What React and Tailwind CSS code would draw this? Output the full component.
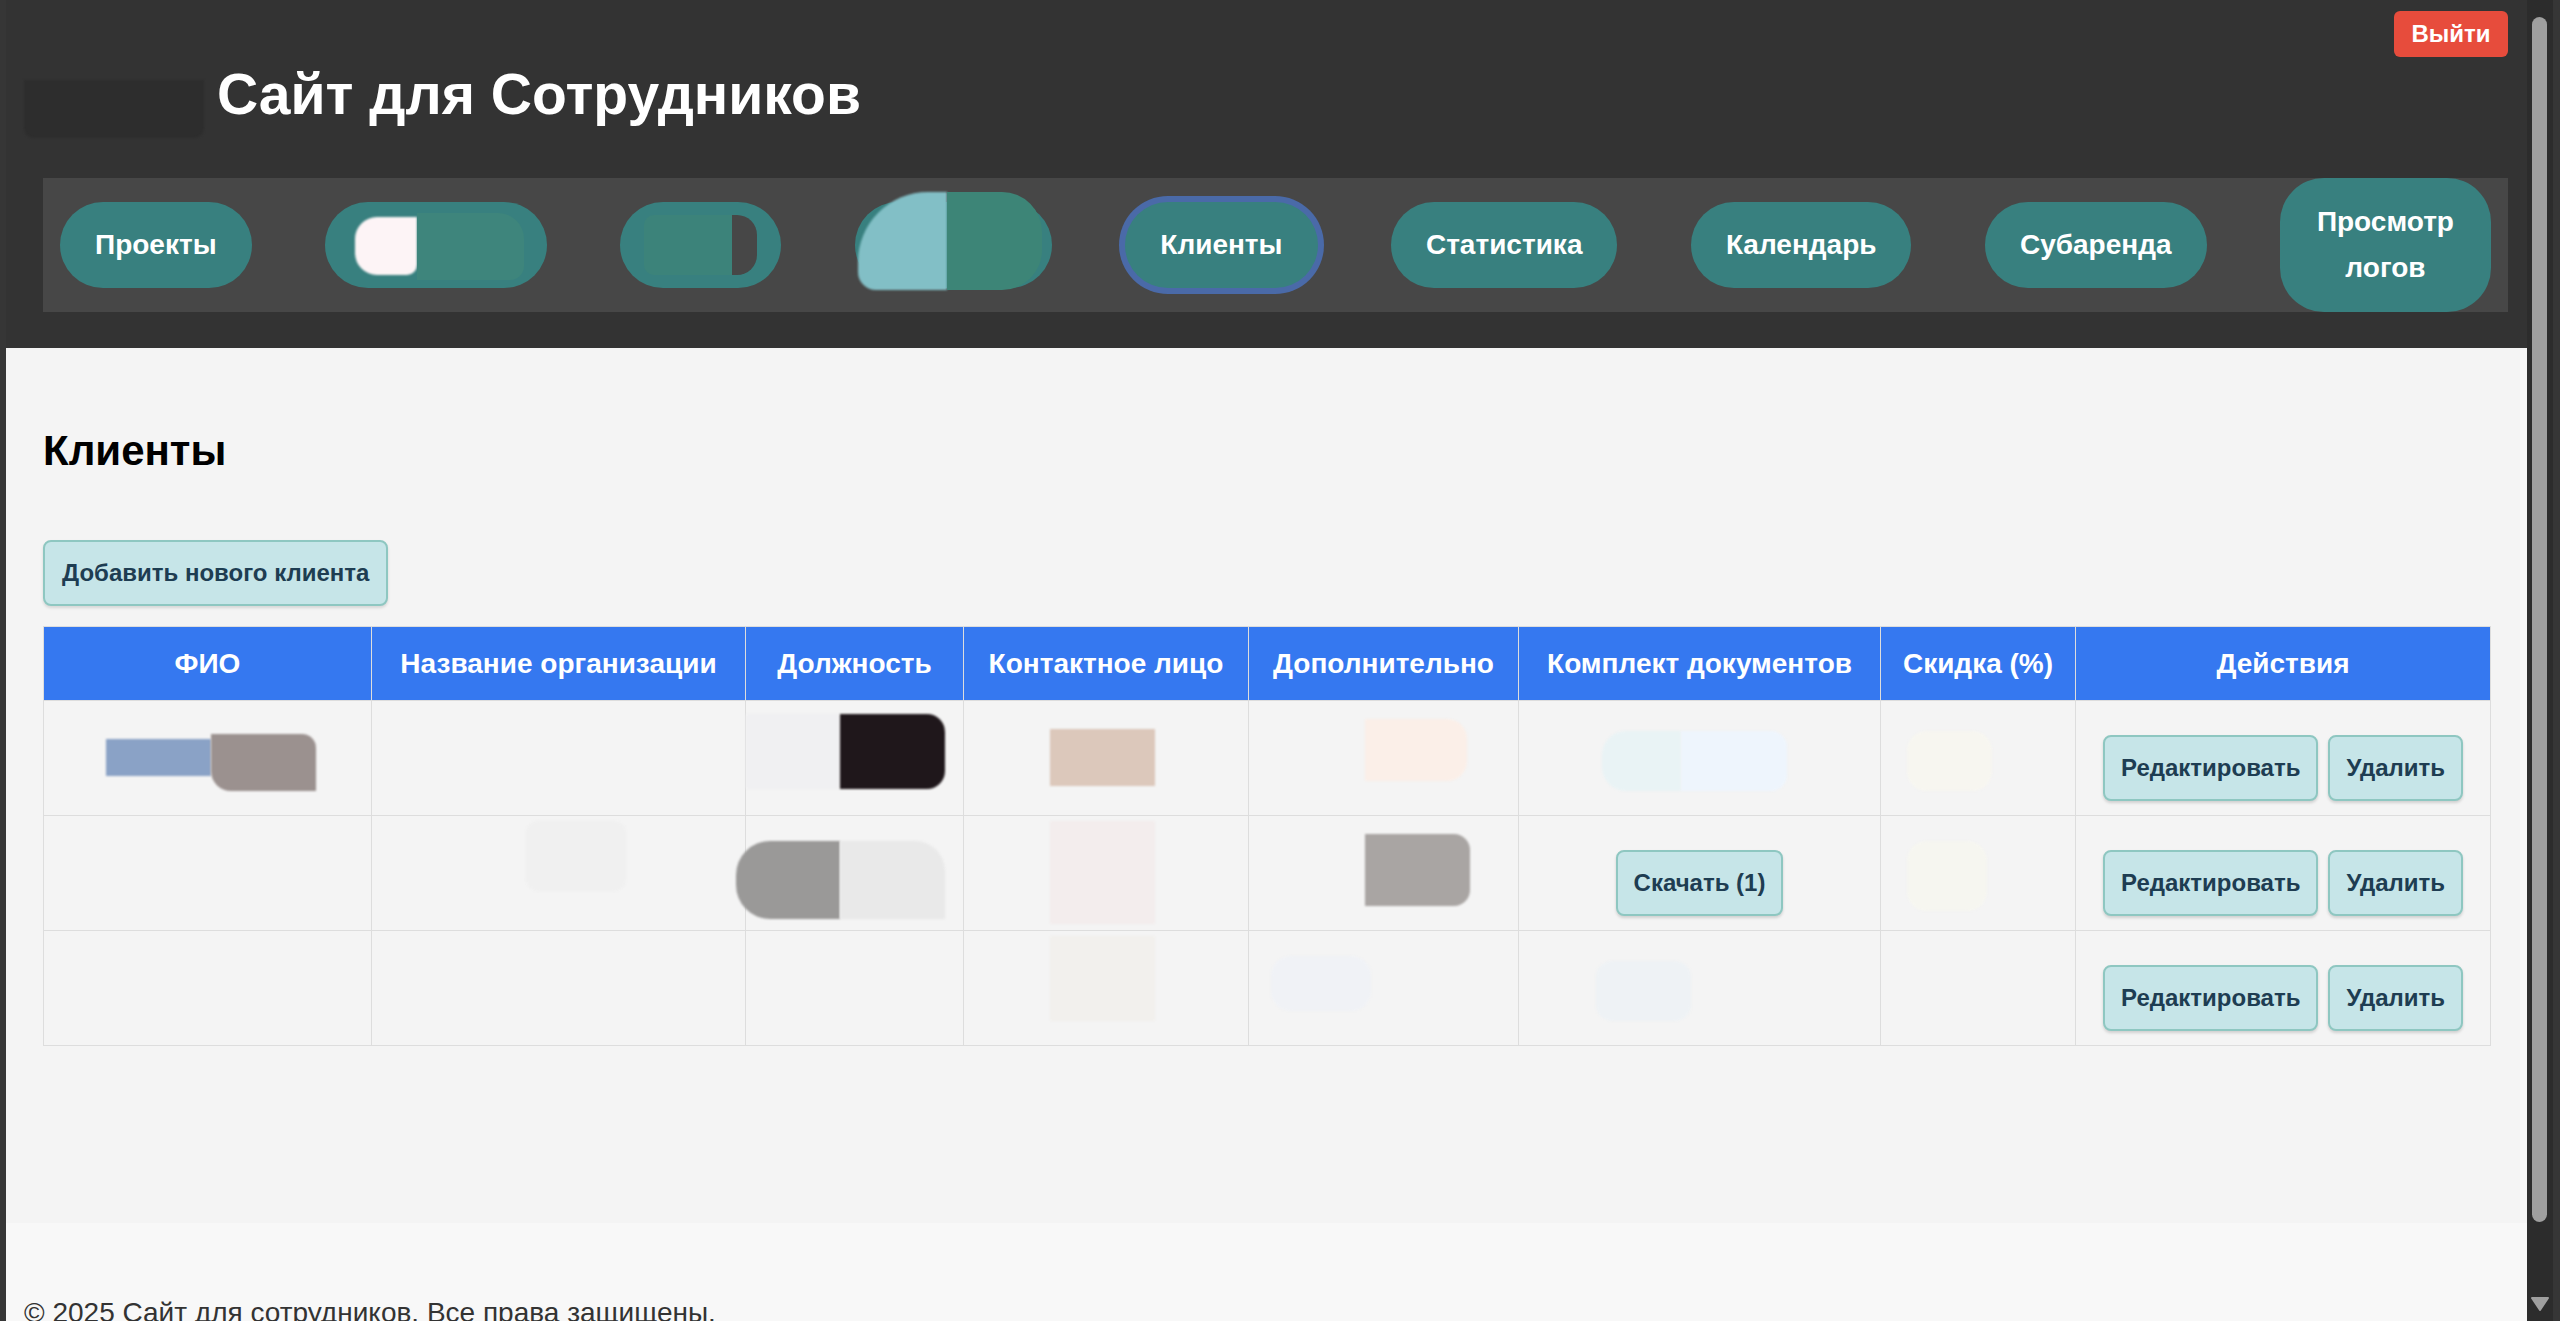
import React from "react";

const navItems = [
  { label: "Проекты" },
  { blur: "a", width: "w-[222px]" },
  { blur: "b", width: "w-[161px]" },
  { blur: "c", width: "w-[197px]" },
  { label: "Клиенты", active: true },
  { label: "Статистика" },
  { label: "Календарь" },
  { label: "Субаренда" },
];

const columns = [
  { title: "ФИО", w: "w-[328px]" },
  { title: "Название организации", w: "w-[374px]" },
  { title: "Должность", w: "w-[218px]" },
  { title: "Контактное лицо", w: "w-[285px]" },
  { title: "Дополнительно", w: "w-[270px]" },
  { title: "Комплект документов", w: "w-[362px]" },
  { title: "Скидка (%)", w: "w-[195px]" },
  { title: "Действия", w: "w-[415px]" },
];

// redacted blobs, one list per cell, positions relative to the cell
const rows = [
  [
    [
      "left-[62px] top-[38px] w-[105px] h-[37px] bg-[#8aa2c6]",
      "left-[167px] top-[33px] w-[105px] h-[57px] bg-[#9b918f] rounded-tr-[14px] rounded-bl-[20px]",
    ],
    [],
    [
      "left-[0px] top-[13px] w-[94px] h-[75px] bg-[#f0f0f2]",
      "left-[94px] top-[13px] w-[105px] h-[75px] bg-[#1f171b] rounded-r-[18px]",
    ],
    ["left-[86px] top-[28px] w-[105px] h-[57px] bg-[#dcc8bb]"],
    ["left-[116px] top-[18px] w-[102px] h-[62px] bg-[#fbefe8] rounded-r-[20px]"],
    [
      "left-[83px] top-[30px] w-[79px] h-[60px] bg-[#e9f3f5] rounded-l-[24px]",
      "left-[162px] top-[30px] w-[106px] h-[60px] bg-[#eef5fd] rounded-r-[16px]",
    ],
    ["left-[26px] top-[30px] w-[85px] h-[60px] bg-[#f7f6f0] rounded-[20px]"],
  ],
  [
    [],
    ["left-[154px] top-[5px] w-[100px] h-[70px] bg-[#f0f0f0] rounded-[12px]"],
    [
      "left-[-10px] top-[25px] w-[104px] h-[78px] bg-[#9a9998] rounded-l-[34px]",
      "left-[94px] top-[25px] w-[105px] h-[78px] bg-[#e9e9e9] rounded-tr-[30px]",
    ],
    ["left-[86px] top-[5px] w-[105px] h-[103px] bg-[#f3eded]"],
    ["left-[116px] top-[18px] w-[105px] h-[72px] bg-[#a9a5a3] rounded-r-[16px]"],
    "download",
    ["left-[26px] top-[25px] w-[80px] h-[70px] bg-[#f6f6f0] rounded-[20px]"],
  ],
  [
    [],
    [],
    [],
    ["left-[86px] top-[5px] w-[105px] h-[85px] bg-[#f2f0ed]"],
    ["left-[22px] top-[25px] w-[100px] h-[55px] bg-[#f0f2f6] rounded-[20px]"],
    ["left-[77px] top-[30px] w-[95px] h-[60px] bg-[#eef2f5] rounded-[16px]"],
    [],
  ],
];

function Blobs({ name }) {
  if (name === "a")
    return (
      <>
        <div className="absolute left-[30px] top-[15px] w-[62px] h-[58px] bg-[#fdf4f6] rounded-l-[22px] rounded-br-[10px] blur-[1px]" />
        <div className="absolute left-[92px] top-[11px] w-[107px] h-[67px] bg-[#3e857c] rounded-tr-[26px] rounded-br-[14px]" />
      </>
    );
  if (name === "b")
    return (
      <>
        <div className="absolute left-[24px] top-[13px] w-[88px] h-[60px] bg-[#3c837a] rounded-l-[10px]" />
        <div className="absolute left-[112px] top-[13px] w-[25px] h-[60px] bg-[#474747] rounded-r-[20px]" />
      </>
    );
  return (
    <>
      <div className="absolute left-[3px] top-[-10px] w-[89px] h-[98px] bg-[#82bfc6] rounded-tl-[70px] rounded-bl-[18px] blur-[1px]" />
      <div className="absolute left-[92px] top-[-10px] w-[95px] h-[98px] bg-[#3d8577] rounded-tr-[40px] rounded-br-[40px]" />
    </>
  );
}

function ActionButton({ children }) {
  return (
    <button className="h-[66px] px-[16px] rounded-[8px] border-2 border-[#8ec7c1] bg-[#c6e5e8] text-[24px] font-bold leading-none text-[#1e3d52] shadow-[0_2px_3px_rgba(0,0,0,0.15)]">
      {children}
    </button>
  );
}

export default function App() {
  return (
    <div className="flex w-[2560px] h-[1321px] overflow-hidden font-['Liberation_Sans',Arial,sans-serif]">
      <div className="w-[6px] shrink-0 bg-[#363636]" />

      <div className="flex flex-col w-[2521px] shrink-0">
        <header className="relative h-[348px] shrink-0 bg-[#333333]">
          <button className="absolute top-[11px] right-[19px] w-[114px] h-[46px] rounded-[6px] bg-[#e74c3c] text-[24px] font-bold leading-none text-white">
            Выйти
          </button>
          <div className="flex items-start h-[122px] pt-[66px] pl-[18px]">
            <div className="mt-[14px] w-[180px] h-[58px] bg-[#2d2d2d] rounded-b-[10px] blur-[1px]" />
            <h1 className="ml-[13px] text-[57px] font-bold leading-none text-white">Сайт для Сотрудников</h1>
          </div>
          <nav className="mt-[56px] ml-[37px] mr-[19px] h-[134px] bg-[#474747] flex items-center justify-between px-[17px]">
            {navItems.map((it, i) =>
              it.blur ? (
                <div key={i} className={`relative h-[86px] ${it.width} rounded-full bg-[#38807f]`}>
                  <Blobs name={it.blur} />
                </div>
              ) : (
                <button
                  key={i}
                  className={
                    "h-[86px] rounded-full bg-[#38807f] px-[35px] text-[28px] font-bold leading-none text-white" +
                    (it.active ? " ring-[6px] ring-[#4a6aa8]" : "")
                  }
                >
                  {it.label}
                </button>
              )
            )}
            <button className="h-[134px] w-[211px] rounded-[44px] bg-[#38807f] px-[30px] text-[28px] font-bold leading-[46px] text-white">
              Просмотр логов
            </button>
          </nav>
        </header>

        <main className="h-[875px] shrink-0 bg-[#f4f4f4] pt-[82px] pl-[37px]">
          <h2 className="text-[42px] font-bold leading-none text-black">Клиенты</h2>
          <button className="mt-[68px] h-[66px] px-[17px] rounded-[8px] border-2 border-[#8ec7c1] bg-[#c6e5e8] text-[24px] font-bold leading-none text-[#1e3d52] shadow-[0_2px_3px_rgba(0,0,0,0.12)]">
            Добавить нового клиента
          </button>
          <table className="mt-[20px] w-[2447px] table-fixed border-collapse">
            <colgroup>
              {columns.map((c) => (
                <col key={c.title} className={c.w} />
              ))}
            </colgroup>
            <thead>
              <tr className="h-[74px] bg-[#3578f0]">
                {columns.map((c) => (
                  <th key={c.title} className="border border-[#dddddd] text-[28px] font-bold leading-none text-white text-center">
                    {c.title}
                  </th>
                ))}
              </tr>
            </thead>
            <tbody>
              {rows.map((cells, r) => (
                <tr key={r} className="h-[115px]">
                  {cells.map((cell, c) => (
                    <td key={c} className="relative border border-[#dddddd] p-0 pt-[19px] text-center">
                      {cell === "download" ? (
                        <ActionButton>Скачать (1)</ActionButton>
                      ) : (
                        cell.map((b, k) => <div key={k} className={`absolute blur-[1px] ${b}`} />)
                      )}
                    </td>
                  ))}
                  <td className="border border-[#dddddd] pt-[19px]">
                    <div className="flex justify-center gap-[10px]">
                      <ActionButton>Редактировать</ActionButton>
                      <ActionButton>Удалить</ActionButton>
                    </div>
                  </td>
                </tr>
              ))}
            </tbody>
          </table>
        </main>

        <footer className="flex-1 bg-[#f8f8f8] pt-[76px] pl-[18px]">
          <p className="text-[28px] leading-none text-[#333333]">© 2025 Сайт для сотрудников. Все права защищены.</p>
        </footer>
      </div>

      <div className="relative w-[33px] shrink-0 flex bg-[#2c2c2c]">
        <div className="absolute left-[5px] top-[17px] w-[15px] h-[1205px] rounded-full bg-[#9f9f9f]" />
        <svg className="absolute left-[4px] top-[1297px]" width="18" height="14" viewBox="0 0 18 14">
          <path d="M1 1 H17 L9 13 Z" fill="#9f9f9f" strokeLinejoin="round" stroke="#9f9f9f" strokeWidth="2" />
        </svg>
        <div className="ml-auto w-[7px] bg-[#363636]" />
      </div>
    </div>
  );
}
